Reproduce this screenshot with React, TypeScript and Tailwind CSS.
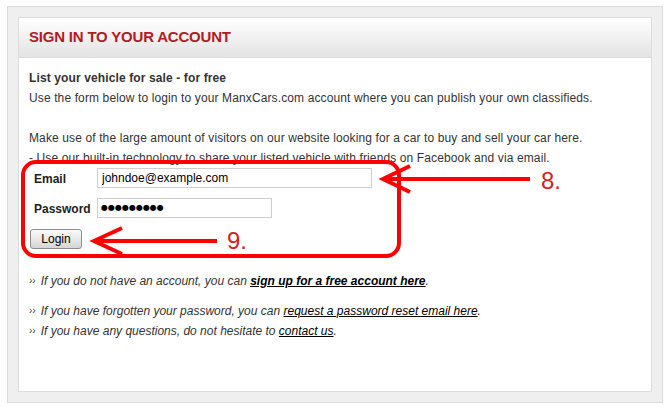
import React from 'react';

const body = { fontFamily: '"Liberation Sans", Arial, sans-serif' };

const Arrows: React.FC = () => (
  <svg className="absolute left-0 top-0 pointer-events-none" width={667} height={407} viewBox="0 0 667 407">
    <rect x={23} y={162} width={376} height={94} rx={13} fill="none" stroke="#ff0000" strokeWidth={4} />
    <line x1={530} y1={179} x2={386} y2={179} stroke="#ff0000" strokeWidth={4} />
    <polyline points="410,166 383,179 410,192" fill="none" stroke="#ff0000" strokeWidth={4} />
    <line x1={217} y1={241} x2={97} y2={241} stroke="#ff0000" strokeWidth={4} />
    <polyline points="122,228 94,241 122,254" fill="none" stroke="#ff0000" strokeWidth={4} />
  </svg>
);

const Row: React.FC<{ children: React.ReactNode }> = ({ children }) => (
  <p className="flex items-center">
    <span className="text-[10px] not-italic mr-[5px] text-[#444]">››</span>
    <span>{children}</span>
  </p>
);

export default function App() {
  return (
    <div className="relative w-[667px] h-[407px] bg-white pt-[6px] pl-[7px]" style={body}>
      <div className="w-[656px] h-[397px] border border-[#dcdcdc] bg-[#efefef] p-[10px]">
        <div className="w-[634px] h-[375px] border border-[#dcdcdc] bg-white flex flex-col">
          <div className="h-[40px] border-b border-[#dcdcdc] bg-gradient-to-b from-white to-[#e3e3e3] flex items-center pl-[10px]">
            <h1 className="text-[15px] font-bold text-[#b31b24] tracking-[-0.2px]">SIGN IN TO YOUR ACCOUNT</h1>
          </div>

          <div className="px-[10px] pt-[10px] text-[12px] leading-[20px] text-[#333]">
            <div className="tracking-[0.12px]">
              <p className="font-bold">List your vehicle for sale - for free</p>
              <p>Use the form below to login to your ManxCars.com account where you can publish your own classifieds.</p>
              <p>&nbsp;</p>
              <p>Make use of the large amount of visitors on our website looking for a car to buy and sell your car here.</p>
              <p>- Use our built-in technology to share your listed vehicle with friends on Facebook and via email.</p>
            </div>

            <form className="flex flex-col pl-[5px]" onSubmit={(e) => e.preventDefault()}>
              <div className="flex items-center h-[20px]">
                <label className="w-[63px] font-bold text-[#222] pt-[2px]">Email</label>
                <input
                  readOnly
                  value="johndoe@example.com"
                  className="w-[275px] h-[20px] border border-[#cfcfcf] px-[4px] text-[12px] text-black outline-none"
                />
              </div>
              <div className="flex items-center h-[20px] mt-[10px]">
                <label className="w-[63px] font-bold text-[#222] pt-[2px]">Password</label>
                <div
                  className="w-[175px] h-[20px] border border-[#cfcfcf] px-[3px] flex items-center text-black text-[8px] leading-none"
                  style={{ fontFamily: '"DejaVu Sans", sans-serif' }}
                >
                  ●●●●●●●●●
                </div>
              </div>
              <div className="mt-[11px] -ml-[4px]">
                <button
                  type="submit"
                  className="w-[52px] h-[20px] border border-[#8e8e8e] rounded-[3px] bg-gradient-to-b from-[#fafafa] to-[#d6d6d6] text-[12px] text-black leading-none"
                >
                  Login
                </button>
              </div>
            </form>

            <div className="mt-[22px] italic text-[#333]">
              <Row>
                If you do not have an account, you can{' '}
                <a href="#" className="font-bold underline text-black">sign up for a free account here</a>.
              </Row>
              <div className="mt-[10px]">
                <Row>
                  If you have forgotten your password, you can{' '}
                  <a href="#" className="underline text-black">request a password reset email here</a>.
                </Row>
                <Row>
                  If you have any questions, do not hesitate to{' '}
                  <a href="#" className="underline text-black">contact us</a>.
                </Row>
              </div>
            </div>
          </div>
        </div>
      </div>

      <Arrows />
      <span className="absolute left-[541px] top-[169px] text-[24px] leading-none text-[#d9201c]">8.</span>
      <span className="absolute left-[227px] top-[229px] text-[24px] leading-none text-[#d9201c]">9.</span>
    </div>
  );
}
